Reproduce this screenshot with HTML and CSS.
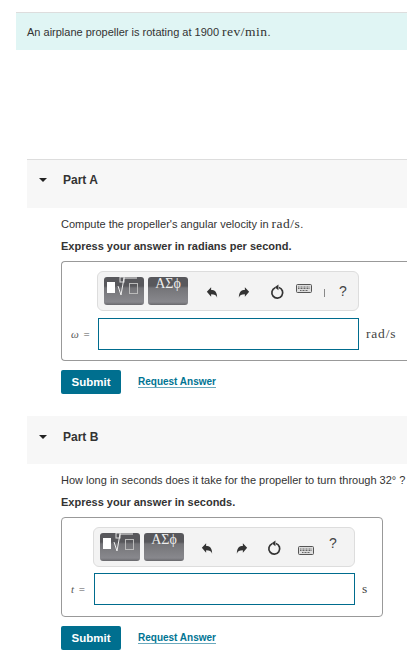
FILE: index.html
```html
<!DOCTYPE html>
<html>
<head>
    <meta charset="utf-8">
    <meta name="viewport" content="width=device-width, initial-scale=1">
    <title>Airplane propeller</title>
    <link rel="stylesheet" href="styles.css">
</head>
<body>
    <div class="intro">An airplane propeller is rotating at 1900 <span class="math">rev/min</span>.</div>

    <section class="part part-a">
        <div class="part-header">
            <span class="arrow"></span>
            <h2>Part A</h2>
        </div>
        <div class="part-body">
            <p class="question">Compute the propeller's angular velocity in <span class="math">rad/s</span>.</p>
            <p class="instruction">Express your answer in radians per second.</p>
            <div class="answer-box">
                <div class="toolbar">
                    <div class="tool-button">
                        <svg width="40" height="28" viewBox="0 0 40 28"><rect x="3" y="5" width="8" height="11" fill="#fff"/><rect x="16" y="0" width="4" height="5" fill="none" stroke="#ddd"/><path d="M14 9l3 9 3-17h13" fill="none" stroke="#eee"/><rect x="25.500" y="6.500" width="8" height="10" fill="none" stroke="#bbb"/></svg>
                    </div>
                    <div class="tool-button symbols">ΑΣϕ</div>
                    <div class="tool-icons">
                        <svg class="icon undo" width="12" height="13" viewBox="0 0 14 14"><path d="M1 6l5-5v3c4 0 7 2 7 9-1-3-3-4-7-4v3z" fill="#333"/></svg>
                        <svg class="icon redo" width="12" height="13" viewBox="0 0 14 14"><path d="M13 6l-5-5v3c-4 0-7 2-7 9 1-3 3-4 7-4v3z" fill="#333"/></svg>
                        <svg class="icon reset" width="15" height="16" viewBox="0 0 16 16"><path d="M9.500 3.200a5.800 5.800 0 1 1-4 .2" fill="none" stroke="#333" stroke-width="1.800"/><path d="M9 0v6L5 3z" fill="#333"/></svg>
                        <svg class="keyboard" width="16" height="9" viewBox="0 0 16 9"><rect x=".5" y=".5" width="15" height="8" rx="1" fill="#ddd" stroke="#555"/><path d="M2 3h12M2 4.500h12M4 6.500h8" stroke="#666" stroke-dasharray="1 .5"/></svg>
                        <span class="sep"></span>
                        <span class="help">?</span>
                    </div>
                </div>
                <div class="answer-row">
                    <span class="var"><i>ω</i> =</span>
                    <div class="answer-input"></div>
                    <span class="unit">rad/s</span>
                </div>
            </div>
            <div class="actions">
                <button class="submit">Submit</button>
                <a class="request" href="#">Request Answer</a>
            </div>
        </div>
    </section>

    <section class="part part-b">
        <div class="part-header">
            <span class="arrow"></span>
            <h2>Part B</h2>
        </div>
        <div class="part-body">
            <p class="question">How long in seconds does it take for the propeller to turn through 32° ?</p>
            <p class="instruction">Express your answer in seconds.</p>
            <div class="answer-box">
                <div class="toolbar">
                    <div class="tool-button">
                        <svg width="40" height="28" viewBox="0 0 40 28"><rect x="3" y="5" width="8" height="11" fill="#fff"/><rect x="16" y="0" width="4" height="5" fill="none" stroke="#ddd"/><path d="M14 9l3 9 3-17h13" fill="none" stroke="#eee"/><rect x="25.500" y="6.500" width="8" height="10" fill="none" stroke="#bbb"/></svg>
                    </div>
                    <div class="tool-button symbols">ΑΣϕ</div>
                    <div class="tool-icons">
                        <svg class="icon undo" width="12" height="13" viewBox="0 0 14 14"><path d="M1 6l5-5v3c4 0 7 2 7 9-1-3-3-4-7-4v3z" fill="#333"/></svg>
                        <svg class="icon redo" width="12" height="13" viewBox="0 0 14 14"><path d="M13 6l-5-5v3c-4 0-7 2-7 9 1-3 3-4 7-4v3z" fill="#333"/></svg>
                        <svg class="icon reset" width="15" height="16" viewBox="0 0 16 16"><path d="M9.500 3.200a5.800 5.800 0 1 1-4 .2" fill="none" stroke="#333" stroke-width="1.800"/><path d="M9 0v6L5 3z" fill="#333"/></svg>
                        <svg class="keyboard" width="16" height="9" viewBox="0 0 16 9"><rect x=".5" y=".5" width="15" height="8" rx="1" fill="#ddd" stroke="#555"/><path d="M2 3h12M2 4.500h12M4 6.500h8" stroke="#666" stroke-dasharray="1 .5"/></svg>
                        <span class="help">?</span>
                    </div>
                </div>
                <div class="answer-row">
                    <span class="var"><i>t</i> =</span>
                    <div class="answer-input"></div>
                    <span class="unit">s</span>
                </div>
            </div>
            <div class="actions">
                <button class="submit">Submit</button>
                <a class="request" href="#">Request Answer</a>
            </div>
        </div>
    </section>
</body>
</html>
```

FILE: styles.css
```css
body {
    margin: 0;
    font-family: "Liberation Sans", Arial, sans-serif;
    font-size: 11px;
    color: #333;
    background-color: #fff;
}
.math {
    font-family: "Liberation Serif", serif;
    font-size: 13.500px;
    letter-spacing: .5px;
}
.intro {
    margin: 12px 0 0 16px;
    height: 38px;
    box-sizing: border-box;
    padding: 12px 11px 0;
    line-height: 14px;
    border-top: 1px solid #ddd;
    background-color: #e0f5f4;
}
.part {
    margin-left: 27px;
}
.part-a {
    margin-top: 109px;
}
.part-b {
    margin-top: 22px;
}
.part-header {
    display: flex;
    align-items: center;
    height: 49px;
    box-sizing: border-box;
    padding: 0 0 9px 12px;
    background-color: #f7f7f7;
}
.part-a .part-header {
    border-top: 1px solid #ddd;
}
.part-b .part-header {
    height: 48px;
    padding-bottom: 7px;
}
.arrow {
    width: 0;
    height: 0;
    border-left: 4px solid transparent;
    border-right: 4px solid transparent;
    border-top: 4px solid #222;
}
h2 {
    margin: 0 0 0 16px;
    font-size: 12px;
    color: #333;
}
.part-body {
    padding-left: 34px;
}
.question {
    margin: 9px 0 0;
    line-height: 14px;
}
.instruction {
    margin: 8px 0 8px;
    line-height: 14px;
    font-weight: bold;
}
.answer-box {
    height: 100px;
    box-sizing: border-box;
    padding-top: 9px;
    border: 1px solid #999;
    border-radius: 4px;
    background-color: #fff;
}
/* box of part A is cut off by the right edge of the window */
.part-a .answer-box {
    border-right: none;
    border-radius: 4px 0 0 4px;
}
.part-b .answer-box {
    width: 322px;
}
.toolbar {
    display: flex;
    align-items: center;
    width: 262px;
    height: 40px;
    box-sizing: border-box;
    margin-left: 35px;
    padding-left: 6px;
    gap: 4px;
    border: 1px solid #ddd;
    border-radius: 6px;
    background-color: #f3f3f3;
}
.part-b .toolbar {
    margin-left: 31px;
}
.tool-button {
    width: 40px;
    height: 28px;
    border-radius: 3px;
    color: #fff;
    background: linear-gradient(#58585c 0, #58585c 9px, #747478 11px, #88888d 25px, #68686c 100%);
}
.tool-button svg {
    display: block;
}
.symbols {
    font-family: "Liberation Serif", serif;
    font-size: 14px;
    line-height: 14px;
    text-align: center;
    color: #eee;
}
.tool-icons {
    display: flex;
    align-items: center;
    margin-left: 14px;
}
.part-b .tool-icons {
    margin-left: 13px;
}
.icon {
    margin-top: 3px;
}
.undo {
    margin-right: 20px;
}
.redo {
    margin-right: 20px;
}
.reset {
    margin-top: 2px;
    margin-right: 11px;
}
.part-b .undo {
    margin-right: 23px;
}
.part-b .redo {
    margin-right: 19px;
}
.part-b .reset {
    margin-right: 16px;
}
.keyboard {
    margin-top: -6px;
}
.part-b .keyboard {
    margin-top: 7px;
}
.sep {
    width: 1px;
    height: 8px;
    margin: 4px 0 0 12px;
    background-color: #888;
}
.help {
    margin-left: 14px;
    font-size: 14px;
    color: #444;
}
.part-b .help {
    margin-left: 15px;
    margin-top: -8px;
}
.answer-row {
    display: flex;
    align-items: center;
    margin-top: 7px;
    padding-left: 9px;
}
.part-b .answer-row {
    margin-top: 6px;
}
.var {
    width: 27px;
    font-family: "Liberation Serif", serif;
    font-size: 11px;
    word-spacing: 2px;
    color: #555;
}
.part-b .var {
    width: 23px;
}
.answer-input {
    width: 261px;
    height: 32px;
    box-sizing: border-box;
    border: 1px solid #006c8e;
    background-color: #fff;
}
.unit {
    margin-left: 7px;
    font-family: "Liberation Serif", serif;
    font-size: 13.500px;
    letter-spacing: .8px;
    color: #444;
}
.actions {
    display: flex;
    align-items: center;
    margin-top: 9px;
}
.submit {
    width: 60px;
    height: 24px;
    padding: 0;
    border: none;
    border-radius: 2px;
    font-family: "Liberation Sans", Arial, sans-serif;
    font-size: 11.500px;
    font-weight: bold;
    color: #fff;
    background-color: #006f8f;
    cursor: pointer;
}
.request {
    margin-left: 17px;
    font-size: 10px;
    font-weight: bold;
    color: #007493;
    text-decoration: none;
    border-bottom: 1px solid #6aa9bd;
}
```
